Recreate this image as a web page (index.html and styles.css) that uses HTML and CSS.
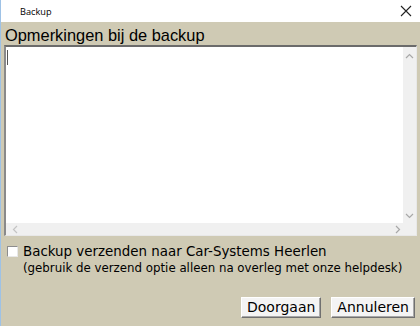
FILE: index.html
```html
<!DOCTYPE html>
<html>
<head>
<meta charset="utf-8">
<link rel="stylesheet" href="styles.css">
</head>
<body>
<div class="window">
  <div class="titlebar">
    <span class="title">Backup</span>
    <svg class="close" width="12" height="12" viewBox="0 0 12 12"><path d="M1 1L11 11M11 1L1 11" stroke="#222" stroke-width="1.1" fill="none"/></svg>
  </div>
  <div class="body">
    <div class="heading">Opmerkingen bij de backup</div>
    <div class="memo">
      <div class="memo-content"><span class="caret"></span></div>
      <div class="vscroll">
        <svg width="9" height="6" viewBox="0 0 9 6"><path d="M1 5L4.5 1.5L8 5" stroke="#a8a8a8" fill="none" stroke-width="1.2"/></svg>
        <svg width="9" height="6" viewBox="0 0 9 6"><path d="M1 1L4.5 4.5L8 1" stroke="#a8a8a8" fill="none" stroke-width="1.2"/></svg>
      </div>
      <div class="hscroll">
        <svg width="6" height="9" viewBox="0 0 6 9"><path d="M5 1L1.5 4.5L5 8" stroke="#c4c4c4" fill="none" stroke-width="1.2"/></svg>
        <svg width="6" height="9" viewBox="0 0 6 9"><path d="M1 1L4.5 4.5L1 8" stroke="#a8a8a8" fill="none" stroke-width="1.2"/></svg>
      </div>
      <div class="corner"></div>
    </div>
    <div class="option">
      <span class="checkbox"></span>
      <div class="option-text">
        <div class="label">Backup verzenden naar Car-Systems Heerlen</div>
        <div class="note">(gebruik de verzend optie alleen na overleg met onze helpdesk)</div>
      </div>
    </div>
    <div class="buttons">
      <button class="btn">Doorgaan</button>
      <button class="btn">Annuleren</button>
    </div>
  </div>
</div>
</body>
</html>
```

FILE: styles.css
```css
html, body {
  margin: 0;
  padding: 0;
}
body {
  width: 420px;
  height: 326px;
  overflow: hidden;
  background: #cfcab4;
}
.window {
  width: 420px;
  height: 326px;
  display: flex;
  flex-direction: column;
  border-left: 1px solid #9ec2e6;
  box-sizing: border-box;
}
.titlebar {
  height: 22px;
  background: #ffffff;
  display: flex;
  align-items: center;
  justify-content: space-between;
  padding: 0 8px 0 19px;
  flex: none;
}
.title {
  font-family: "Open Sans", sans-serif;
  font-size: 9.2px;
  color: #000;
}
.close {
  display: block;
}
.body {
  flex: 1;
  background: #cfcab4;
  padding: 3px 3px 0 3px;
  display: flex;
  flex-direction: column;
}
.heading {
  font-family: "Liberation Sans", Arial, sans-serif;
  font-size: 16.4px;
  color: #000;
  line-height: 20px;
  height: 20px;
  padding-left: 1px;
}
.memo {
  height: 191px;
  box-sizing: border-box;
  border-top: 2px solid #6b6b6b;
  border-left: 2px solid #8a8a8a;
  border-right: 1px solid #e8e8e8;
  border-bottom: 1px solid #e8e8e8;
  background: #fff;
  display: grid;
  grid-template-columns: 1fr 13px;
  grid-template-rows: 1fr 12px;
}
.memo-content {
  position: relative;
  background: #fff;
}
.caret {
  position: absolute;
  left: 1px;
  top: 3px;
  width: 1px;
  height: 15px;
  background: #555;
}
.vscroll {
  background: #f0f0f0;
  display: flex;
  flex-direction: column;
  justify-content: space-between;
  align-items: center;
  padding: 6px 0 4px;
}
.hscroll {
  background: #f0f0f0;
  display: flex;
  justify-content: space-between;
  align-items: center;
  padding: 0 2px 0 6px;
}
.corner {
  background: #f0f0f0;
}
.option {
  display: flex;
  align-items: flex-start;
  margin-top: 7px;
  margin-left: 3px;
}
.checkbox {
  width: 11px;
  height: 11px;
  box-sizing: border-box;
  background: #fff;
  border-top: 1px solid #8d8d8d;
  border-left: 1px solid #8d8d8d;
  border-right: 1px solid #e8e8e8;
  border-bottom: 1px solid #e8e8e8;
  margin-top: 3px;
  margin-right: 5px;
  flex: none;
}
.option-text {
  font-family: "DejaVu Sans", sans-serif;
  color: #000;
}
.label {
  font-size: 13.4px;
  line-height: 17px;
}
.note {
  font-size: 11.8px;
  line-height: 16px;
}
.buttons {
  display: flex;
  justify-content: flex-end;
  gap: 10px;
  margin-top: auto;
  padding: 0 2px 8px 0;
}
.btn {
  font-family: "DejaVu Sans", sans-serif;
  font-size: 14px;
  height: 21px;
  padding: 0 5px;
  background: #f4f4f4;
  color: #000;
  border: 1px solid;
  border-color: #ffffff #707070 #707070 #ffffff;
  box-shadow: inset -1px -1px 0 #a8a8a8;
  line-height: 17px;
}
```
